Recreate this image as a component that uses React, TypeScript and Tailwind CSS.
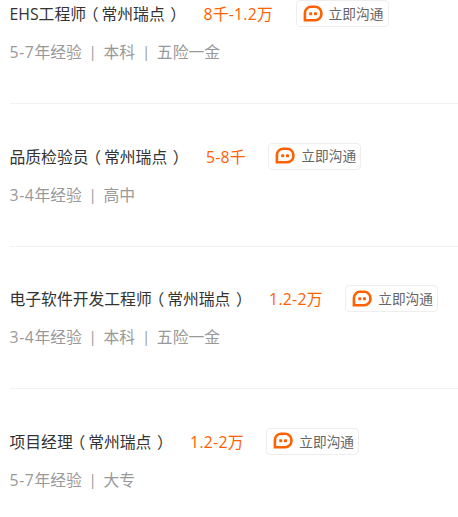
import { Fragment } from 'react'

const JOBS = [
  { title: 'EHS工程师', salary: '8千-1.2万', years: '5-7', tags: ['本科', '五险一金'] },
  { title: '品质检验员', salary: '5-8千', years: '3-4', tags: ['高中'] },
  { title: '电子软件开发工程师', salary: '1.2-2万', years: '3-4', tags: ['本科', '五险一金'] },
  { title: '项目经理', salary: '1.2-2万', years: '5-7', tags: ['大专'] },
]

function ChatIcon() {
  return (
    <svg width="20" height="17" viewBox="0 0 20 17" className="-mt-px flex-shrink-0">
      <path
        d="M1.9 15.2V8a6.2 6.2 0 0 1 6.2-6.2h4a6.3 6.3 0 0 1 6.3 6.3v.8a6.3 6.3 0 0 1-6.3 6.3z"
        fill="#fff"
        stroke="#ff6000"
        strokeWidth="2.6"
      />
      <rect x="6.2" y="7.2" width="3" height="3" rx="0.7" fill="#ff6000" />
      <rect x="11" y="7.2" width="3" height="3" rx="0.7" fill="#ff6000" />
    </svg>
  )
}

export default function App() {
  return (
    <main className="h-[517px] overflow-hidden bg-white pl-[9.5px] font-['Open_Sans','Noto_Sans_CJK_SC',sans-serif] text-[15.8px]">
      {JOBS.map(({ title, salary, years, tags }) => (
        <section key={title} className="h-[142.67px] whitespace-nowrap">
          <div className="flex h-[104px] flex-col border-b border-[#f2f2f2]">
            <div className="flex h-[27px] items-center">
              <h2 className="pt-[2px] leading-[27px] text-[#333]">
                {title}
                {/* half-width brackets, padded back out so the glyphs sit centred */}
                <span className="mr-[3px] ml-[4.6px] [font-feature-settings:'halt']">（</span>
                常州瑞点
                <span className="mr-[1.8px] ml-[5.5px] [font-feature-settings:'halt']">）</span>
              </h2>
              <span className="ml-[23.5px] pt-[2px] leading-[27px] tracking-[0.25px] text-[#ff6000]">{salary}</span>
              <button className="ml-[22.5px] flex h-[27px] w-[93px] items-center rounded border border-[#eee] pl-[6px] text-[13.7px] text-[#666]">
                <ChatIcon />
                <span className="ml-[6px] pt-px">立即沟通</span>
              </button>
            </div>
            <p className="mt-[13px] flex leading-[24px] text-[#999]">
              <span className="tracking-[0.6px]">{years}</span>
              <span>年经验</span>
              {tags.map((tag) => (
                <Fragment key={tag}>
                  <span className="w-[21.7px] text-center text-[15px] leading-[22px]">|</span>
                  <span>{tag}</span>
                </Fragment>
              ))}
            </p>
          </div>
        </section>
      ))}
    </main>
  )
}
